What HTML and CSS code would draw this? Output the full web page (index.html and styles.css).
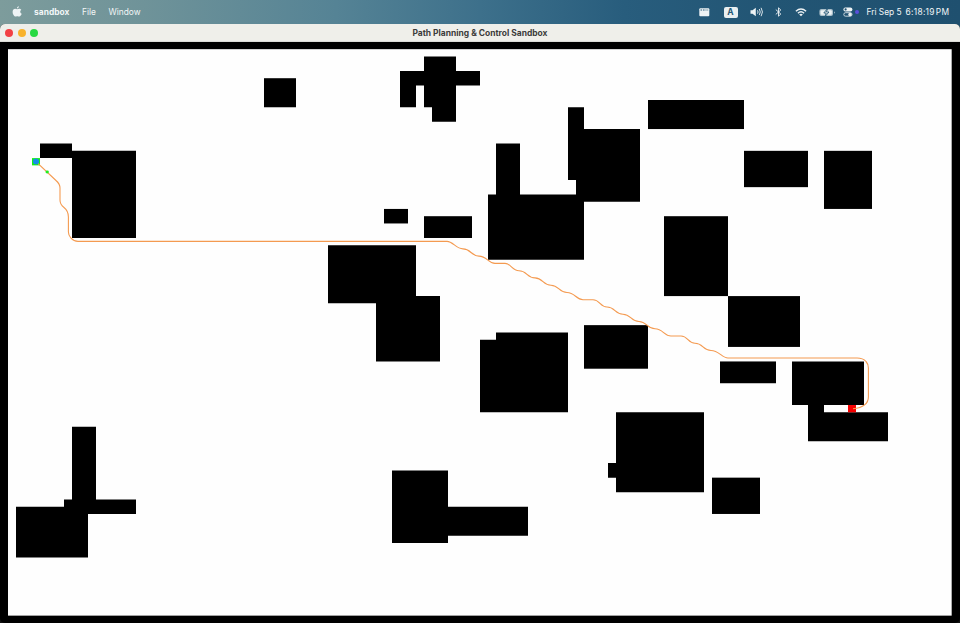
FILE: index.html
```html
<!DOCTYPE html>
<html lang="en">
<head>
<meta charset="utf-8">
<title>Path Planning &amp; Control Sandbox</title>
<link rel="stylesheet" href="styles.css">
</head>
<body>
<header class="menubar">
  <svg class="apple" viewBox="0 0 10 12"><path d="M6.900.2C7 1.300 6.100 2.500 4.900 2.500 4.800 1.400 5.800.4 6.900.2ZM5.100 3.200C5.700 3.200 6.300 2.700 7.200 2.700 8.100 2.700 8.900 3.200 9.300 3.800 7.700 4.800 7.900 7.100 9.700 7.800 9.300 9 8.300 10.600 7.300 10.600 6.500 10.600 6.200 10.200 5.300 10.200 4.400 10.200 4.100 10.600 3.400 10.600 2.200 10.600.6 8.200.6 6 .6 3.900 1.900 2.800 3.200 2.800 4 2.800 4.600 3.200 5.100 3.200Z"/></svg>
  <span class="app-name">sandbox</span>
  <span class="menu-file">File</span>
  <span class="menu-window">Window</span>
  <div class="status">
    <svg class="icon-keys" viewBox="0 0 11 9"><rect x=".3" y=".3" width="10" height="8" rx="1"/><path class="cut" d="M1.500 2h1.600M4 2h1.600M6.500 2h1M8.400 2h.8"/></svg>
    <span class="input-source">A</span>
    <svg class="icon-sound" viewBox="0 0 14 10"><path d="M.5 3.300H2.500L5.800.7V9.300L2.500 6.700H.5Z"/><path class="line" d="M7.500 3.300Q8.600 5 7.500 6.700M9.300 2Q11.200 5 9.300 8M11.100.8Q13.800 5 11.100 9.200"/></svg>
    <svg class="icon-bluetooth" viewBox="0 0 7 10"><path class="line" d="M.8 2.600 5.800 7 3.500 9.200V.8L5.800 3 .8 7.400"/></svg>
    <svg class="icon-wifi" viewBox="0 0 12 9"><path class="line wide" d="M.9 3.200Q6-1.300 11.100 3.200M2.900 5.200Q6 2.500 9.100 5.200"/><path d="M4.200 6.500Q6 5.200 7.800 6.500L6 8.300Z"/></svg>
    <svg class="icon-battery" viewBox="0 0 17 9"><rect class="shell" x=".4" y="1" width="13.600" height="7" rx="2"/><rect x="1.600" y="2.200" width="11.200" height="4.600" rx="1"/><path d="M15 3.300Q16.300 4.500 15 5.700Z"/><path class="bolt" d="M8.500.6 4.800 5H7.200L6.100 8.500 10 4H7.500Z"/></svg>
    <svg class="icon-controls" viewBox="0 0 10 10"><rect x=".4" y=".4" width="9" height="4" rx="2"/><circle class="knob" cx="2.600" cy="2.400" r="1.100"/><rect class="outline" x=".8" y="5.700" width="8.200" height="3.500" rx="1.700"/><circle cx="7" cy="7.500" r="1.700"/></svg>
    <i class="privacy-dot"></i>
    <span class="date">Fri Sep 5</span>
    <span class="clock">6:18:19<span class="meridiem">PM</span></span>
  </div>
</header>
<main class="window">
  <div class="titlebar">
    <div class="lights"><i class="close"></i><i class="minimize"></i><i class="zoom"></i></div>
    <h1>Path Planning &amp; Control Sandbox</h1>
  </div>
  <svg class="map" viewBox="0 42 960 581" preserveAspectRatio="none">
    <g transform="translate(0 41.900) scale(8 7.2625)">
      <rect class="floor" x="1" y="1" width="117.960" height="78"/>
      <rect x="33" y="5" width="4" height="4"/>
      <path d="M53 2h4v2h3v2h-3v5h-3v-2h-1v-3h-1v3h-2v-5h3z"/>
      <path d="M71 9h2v3h7v10h-8v-3h-1z"/>
      <path d="M62 14h3v7h8v9h-12v-9h1z"/>
      <rect x="81" y="8" width="12" height="4"/>
      <rect x="93" y="15" width="8" height="5"/>
      <rect x="103" y="15" width="6" height="8"/>
      <path d="M5 14h4v1h8v12h-8v-11h-4z"/>
      <rect x="48" y="23" width="3" height="2"/>
      <rect x="53" y="24" width="6" height="3"/>
      <rect x="83" y="24" width="8" height="11"/>
      <rect x="91" y="35" width="9" height="7"/>
      <path d="M41 28h11v7h3v9h-8v-8h-6z"/>
      <path d="M60 41h2v-1h9v11h-11z"/>
      <rect x="73" y="39" width="8" height="6"/>
      <rect x="90" y="44" width="7" height="3"/>
      <path d="M99 44h9v6h-5v1h8v4h-10v-5h-2z"/>
      <path d="M77 51h11v11h-11v-2h-1v-2h1z"/>
      <rect x="89" y="60" width="6" height="5"/>
      <path d="M49 59h7v5h10v4h-10v1h-7z"/>
      <path d="M9 53h3v10h5v2h-6v6h-9v-7h6v-1h1z"/>
      <rect class="goal" x="106" y="50" width="1" height="1"/>
      <rect class="start" x="4" y="16" width="1" height="1"/>
    </g>
    <path class="route" d="M36 161.700L56 180.500Q60 184 60 188V200Q60 204.500 64 207.500Q68.400 211 68.400 217V232C68.400 236 72 241.400 78 241.400H447C453 241.400 456 248.900 463 248.900C471 248.900 471 256.100 479 256.100C487 256.100 488 263.400 495 263.400H505C511 263.400 512 270.700 519 270.700C527 270.700 527 277.900 535 277.900C543 277.900 543 285.200 551 285.200C559 285.200 559 292.500 567 292.500C575 292.500 576 299.700 583 299.700H593C600 299.700 600 307 607 307C615 307 615 314.200 623 314.200C631 314.200 631 321.500 639 321.500C647 321.500 647 328.800 655 328.800C663 328.800 664 336 671 336H681C688 336 688 343.300 695 343.300C703 343.300 703 350.500 711 350.500C719 350.500 722 358 728 358H857Q863 358 866 361.500Q868.400 364 868.400 368V397Q868.400 407 853 408.800"/>
    <circle class="robot" cx="36" cy="161.500" r="3"/>
    <ellipse class="lookahead" cx="47.200" cy="172" rx="1.700" ry="1.400"/>
  </svg>
</main>
</body>
</html>
```

FILE: styles.css
```css
* { box-sizing: border-box; }
html, body { height: 100%; }
body {
  margin: 0;
  display: flex;
  flex-direction: column;
  overflow: hidden;
  background: linear-gradient(90deg, #7d9c9c 0%, #6f9399 15%, #558395 35%, #3d708b 50%, #285d7d 65%, #225574 80%, #1f506f 100%) 0 0 / 100% 60px no-repeat #111;
  font-family: Inter, "Liberation Sans", sans-serif;
}
.menubar {
  height: 24px;
  display: flex;
  align-items: center;
  padding: 0 9.500px 0 12px;
  color: #f2f6f7;
  font-size: 8.4px;
  line-height: 12px;
  white-space: nowrap;
}
.menubar svg { fill: #eef3f5; flex: none; overflow: visible; }
.apple { width: 10px; height: 12px; }
.app-name { width: 35px; margin-left: 12px; font-weight: 700; letter-spacing: .05px; }
.menu-file { width: 14px; margin-left: 13px; }
.menu-window { margin-left: 12.500px; }
.status { margin-left: auto; display: flex; align-items: center; }
.line { fill: none; stroke: #eef3f5; stroke-width: .9; }
.line.wide { stroke-width: 1.4; }
.cut { stroke: #285b78; stroke-width: 1; }
.icon-keys { width: 11px; height: 9px; margin-right: 13.500px; }
.input-source {
  width: 14px;
  height: 11px;
  margin-right: 12.500px;
  border-radius: 2px;
  background: #e9eff1;
  color: #245675;
  font-size: 8.5px;
  font-weight: 700;
  line-height: 11px;
  text-align: center;
}
.icon-sound { width: 14px; height: 10px; margin-right: 11px; }
.icon-bluetooth { width: 7px; height: 10px; margin-right: 13px; }
.icon-wifi { width: 12px; height: 9px; margin-right: 11.500px; }
.icon-battery { width: 17px; height: 9px; margin-right: 7px; }
.shell { fill: #a9bec9; }
.bolt { stroke: #245675; stroke-width: .9; }
.icon-controls { width: 10px; height: 10px; margin-right: 2px; }
.knob { fill: #245675; }
.outline { fill: none; stroke: #eef3f5; stroke-width: .8; }
.privacy-dot { width: 4.500px; height: 4.500px; margin-right: 7.500px; border-radius: 50%; background: #5a50dc; }
.date { width: 34px; margin-right: 5px; }
.clock { width: 45px; letter-spacing: .3px; }
.meridiem { margin-left: 1px; }
.window {
  flex: 1;
  min-height: 0;
  display: flex;
  flex-direction: column;
  overflow: hidden;
  border-radius: 5px;
  background: #000;
}
.titlebar {
  height: 18px;
  flex: none;
  display: grid;
  grid-template-columns: 1fr auto 1fr;
  align-items: center;
  padding: 0 5px;
  border-bottom: 1px solid #dcdcd8;
  background: #efefea;
}
.titlebar h1 { margin: 0; color: #3c3c3b; font-size: 8.45px; font-weight: 700; line-height: 12px; }
.lights { display: flex; gap: 4.700px; }
.lights i { width: 8px; height: 8px; border-radius: 50%; }
.close { background: #f24144; }
.minimize { background: #f8b32c; }
.zoom { background: #28d942; }
.map { display: block; width: 100%; flex: 1; min-height: 0; }
.floor { fill: #fefefe; }
.goal { fill: #f50000; }
.start { fill: #12f312; }
.robot { fill: #168ce8; }
.lookahead { fill: #20ee20; }
.route { fill: none; stroke: #f49a50; stroke-width: 1.100; }
```
